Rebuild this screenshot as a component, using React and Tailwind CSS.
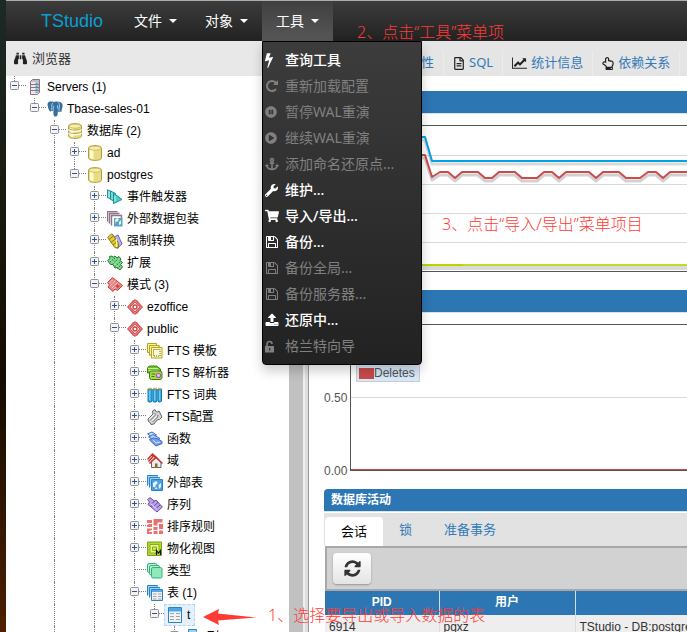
import React from "react";
import {
  FaBinoculars,
  FaPauseCircle,
  FaPlayCircle,
  FaAnchor,
  FaWrench,
  FaShoppingCart,
  FaUnlockAlt,
  FaRegFileAlt,
  FaRegHandPointUp,
  FaTachometerAlt,
  FaInfoCircle,
} from "react-icons/fa";

const UI = "font-['Noto_Sans','Noto_Sans_CJK_SC',sans-serif]";
const ARIAL = "font-['Liberation_Sans','Noto_Sans_CJK_SC',sans-serif]";

/* ---------- glyph icons ---------- */

function Glyph({ d, box = "0 0 1792 1792", className = "size-[14px]" }) {
  return (
    <svg viewBox={box} fill="currentColor" className={className} aria-hidden="true">
      <path d={d} />
    </svg>
  );
}

const BOLT =
  "M1333 566q18 20 7 44l-540 1157q-13 25-42 25-4 0-14-2-17-5-25.5-19t-4.5-30l197-808-406 101q-4 1-12 1-18 0-31-11-18-15-13-39l201-825q4-14 16-23t28-9h328q19 0 32 12.5t13 29.5q0 8-5 18l-171 463 396-98q8-2 12-2 19 0 34 15z";
const REPEAT =
  "M1664 256v448q0 26-19 45t-45 19h-448q-42 0-59-40-17-39 14-69l138-138q-148-137-349-137-104 0-198.5 40.5t-163.5 109.5-109.5 163.5-40.5 198.5 40.5 198.5 109.5 163.5 163.5 109.5 198.5 40.5q119 0 225-52t179-147q7-10 23-12 14 0 25 9l137 138q9 8 9.5 20.5t-7.5 22.5q-109 132-264 204.5t-327 72.5q-156 0-298-61t-245-164-164-245-61-298 61-298 164-245 245-164 298-61q147 0 284.5 55.5t244.5 156.5l130-129q29-31 70-14 39 17 39 59z";
const REFRESH =
  "M1639 1056q0 5-1 7-64 268-268 434.5t-478 166.5q-146 0-282.5-55t-243.5-157l-129 129q-19 19-45 19t-45-19-19-45v-448q0-26 19-45t45-19h448q26 0 45 19t19 45-19 45l-137 137q71 66 161 102t187 36q134 0 250-65t186-179q11-17 53-117 8-23 30-23h192q13 0 22.5 9.5t9.5 22.5zm25-800v448q0 26-19 45t-45 19h-448q-26 0-45-19t-19-45 19-45l138-138q-148-137-349-137-134 0-250 65t-186 179q-11 17-53 117-8 23-30 23h-199q-13 0-22.5-9.5t-9.5-22.5v-7q65-268 270-434.5t480-166.5q146 0 284 55.5t245 156.5l130-129q19-19 45-19t45 19 19 45z";
const FLOPPY =
  "M512 1536h768v-384h-768v384zm896 0h128v-896q0-14-10-38.5t-20-34.5l-281-281q-10-10-34-20t-39-10v416q0 40-28 68t-68 28h-576q-40 0-68-28t-28-68v-416h-128v1280h128v-416q0-40 28-68t68-28h832q40 0 68 28t28 68v416zm-384-928v-320q0-13-9.5-22.5t-22.5-9.5h-192q-13 0-22.5 9.5t-9.5 22.5v320q0 13 9.5 22.5t22.5 9.5h192q13 0 22.5-9.5t9.5-22.5zm640 32v928q0 40-28 68t-68 28h-1344q-40 0-68-28t-28-68v-1344q0-40 28-68t68-28h928q40 0 88 20t76 48l280 280q28 28 48 76t20 88z";
const UPLOAD =
  "M1344 1472q0-26-19-45t-45-19-45 19-19 45 19 45 45 19 45-19 19-45zm256 0q0-26-19-45t-45-19-45 19-19 45 19 45 45 19 45-19 19-45zm128-224v320q0 40-28 68t-68 28h-1472q-40 0-68-28t-28-68v-320q0-40 28-68t68-28h427q21 56 70.5 92t110.5 36h256q61 0 110.5-36t70.5-92h427q40 0 68 28t28 68zm-325-648q-17 40-59 40h-256v448q0 26-19 45t-45 19h-256q-26 0-45-19t-19-45v-448h-256q-42 0-59-40-17-39 14-69l448-448q18-19 45-19t45 19l448 448q31 30 14 69z";
const LINE_CHART =
  "M2048 1536v128h-2048v-1536h128v1408h1920zm-128-1248v435q0 21-19.5 29.5t-35.5-7.5l-121-121-633 633q-10 10-23 10t-23-10l-233-233-416 416-192-192 585-585q10-10 23-10t23 10l233 233 464-464-121-121q-16-16-7.5-35.5t29.5-19.5h435q14 0 23 9t9 23z";

/* ---------- tree icons ---------- */

function Pic({ children }) {
  return (
    <svg viewBox="0 0 16 16" className="size-4 shrink-0" aria-hidden="true">
      {children}
    </svg>
  );
}

function Cylinder({ bands }) {
  return (
    <Pic>
      <path d="M1.5 3.2C1.5 1.6 4.2.6 8 .6s6.5 1 6.5 2.6v9.600c0 1.600-2.700 2.600-6.500 2.600s-6.500-1-6.500-2.600z" fill="#e6dc84" stroke="#b39a3a" />
      <path d="M3 4.500v8.600c1 .7 2.200 1 3.500 1.200V5.300C5 5.200 3.900 4.900 3 4.500z" fill="#fffbd0" />
      <ellipse cx="8" cy="3.2" rx="6" ry="2" fill="#f6efb0" stroke="#c9b456" strokeWidth=".8" />
      {bands && (
        <path d="M1.5 6.400C3 8.600 13 8.600 14.500 6.400M1.500 9.800c1.500 2.200 11.500 2.200 13 0" fill="none" stroke="#fffdf0" strokeWidth="1.6" />
      )}
      {bands && (
        <path d="M1.5 5.400C3 7.600 13 7.600 14.500 5.400M1.500 8.900c1.500 2.200 11.500 2.200 13 0" fill="none" stroke="#b39a3a" strokeWidth=".8" />
      )}
    </Pic>
  );
}

const ICONS = {
  servers: (
    <Pic>
      <path d="M3.5 2.5l2-2h7v13l-2 2h-7z" fill="#c9b9c6" stroke="#8a7486" />
      <path d="M4 3h6.5v12H4z" fill="#efe6ee" />
      <path d="M4 5.5h8M4 8.5h8M4 11.5h8" stroke="#8a7486" />
      <path d="M8.5 3.5h2v1.5h-2zM8.5 6.5h2v1.5h-2zM8.5 9.5h2v1.5h-2zM8.5 12.5h2v1.5h-2z" fill="#2fb7c9" />
    </Pic>
  ),
  elephant: (
    <Pic>
      <path
        d="M3.300.6C1.200.8.300 2.200.6 4.300c.3 2.300 1.200 5 2.300 6 .8.6 1.500-.2 2-.9.2.5.8.7 1.500.6-.1 2 0 3.700.5 4.700.4.9 1.900 1.200 2.900.5.9-.6.900-2 1-4.700 1.200.5 3 .3 4-.3.6-.4.3-.8-.5-.8 1-2 1.600-4.500 1.100-6.200C14.800 1.300 13 .4 11 .7 9.600.3 8 .3 6.800 1 5.700.6 4.500.500 3.300.6z"
        fill="#336f9f"
      />
      <path
        d="M5.900 1.800C4.700 3.200 4.600 5 4.800 6.500c.1 1 0 2-.2 2.700M6.500 9.800c-.6-1-.300-2 .100-3 .3-.8.100-1.600-.4-2.100M11.200 1.400c1.300 1.300 1.500 3 1.100 4.600-.3 1.200-.6 2.500-.2 3.900M10.700 4.200c-.5 1.200 0 2.600.4 3.700"
        fill="none"
        stroke="#d6e6f3"
        strokeWidth=".8"
      />
    </Pic>
  ),
  databases: <Cylinder bands />,
  database: <Cylinder />,
  trigger: (
    <Pic>
      <path d="M.5.8l4.5 2v7l-4.500-1z" fill="#8fe6e0" stroke="#238f95" />
      <path d="M3.5 2l5 2.500v8l-5-2z" fill="#6fdcd6" stroke="#238f95" />
      <path d="M6.5 4l8.500 6.500-8.500 4z" fill="#3fcfc9" stroke="#238f95" />
      <path d="M8 7v5.5" stroke="#c9fbf7" />
    </Pic>
  ),
  fdw: (
    <Pic>
      <path d="M.5 10.5V.5h10M2.500 12.500v-10h10M4.500 14.500v-10h10V7" fill="none" stroke="#8d7284" strokeWidth="1.4" />
      <path d="M7 7h8.500v8.500H7z" fill="#5aa5bd" />
      <path d="M8 9l2-2 2 1-1 2-2 1v2zM12 11l2-2v4l-2 1z" fill="#e8f6fa" />
    </Pic>
  ),
  cast: (
    <Pic>
      <path d="M7 4l4-2 4 9-5 4.5z" fill="#b9b2ee" stroke="#6a60c0" />
      <path d="M.6 4.5L5 .7l6.500 9.500v4.500H8z" fill="#e0cd34" stroke="#8f7d16" />
      <path d="M2 6.5l5-4M4 9.500l5-4M6 12l5-4" stroke="#8f7d16" />
      <path d="M9.5 6v8" stroke="#fff7a8" />
    </Pic>
  ),
  extension: (
    <Pic>
      <path d="M.6 5.5L3 3.500l-.5-2 2.500-.5 1 1.500 2-1.500 2 2 2-1.500 2 2.500-1 1.500 2.500 2-2 2 2 2.500-2.500 3-3-2.500-2 .5-2-3.500-2.500 0z" fill="#7fd68c" stroke="#1e7a34" />
      <path d="M3 7l5-4M5.5 9l5-4.500M8 11.500L13 7M10 13.500l4-3.500" stroke="#1e7a34" strokeDasharray="1.5 1" />
      <path d="M4 5.5l6 6" stroke="#dffbe0" strokeDasharray="1 1.5" />
    </Pic>
  ),
  schemas: (
    <Pic>
      <path d="M.6 5.5L5.500.6 10 4l5.500 4.500-5 5L8 12l-2 2.500L1 10l1.500-2z" fill="#e98787" stroke="#c43d3d" />
      <path d="M3 5.5l3-3M3 9l6-6M5 11l6-6M7 12l5.500-5.500" stroke="#fff" strokeWidth=".8" strokeDasharray="1 1" />
      <path d="M10.5 7l2.500 2-2.500 2.500L8.500 9z" fill="#d84646" />
    </Pic>
  ),
  schema: (
    <Pic>
      <path d="M5.7 1.2h4.600l5 6.800-5 6.800H5.700L.7 8z" fill="#e46a6a" />
      <path d="M8 .5l7.500 7.500L8 15.500.5 8z" fill="#e88080" stroke="#c94545" />
      <path d="M8 3.2L12.800 8 8 12.800 3.200 8z" fill="#fff" stroke="#c94545" />
      <circle cx="8" cy="8" r="2" fill="#fff" stroke="#c94545" strokeWidth="1.4" />
    </Pic>
  ),
  ftsTemplate: (
    <Pic>
      <path d="M.5.5h9v9h-9zM2.500 2.500h9.500v9.500H2.500z" fill="#f7f3a0" stroke="#b5a51c" />
      <path d="M2.5 2.500h9.500v9.500H2.500z" fill="#f7f3a0" stroke="#b5a51c" />
      <path d="M4.5 4.500h10.500v10.500H4.500z" fill="#fbf8b4" stroke="#b5a51c" />
      <path d="M6.5 6.500h6.500v6.500H6.500z" fill="#fdfbd8" stroke="#6b6410" strokeDasharray="1 1" />
    </Pic>
  ),
  ftsParser: (
    <Pic>
      <path d="M.5 4c0-2 1-3 3-3h6l4 3v4H.5z" fill="#6fbf2b" stroke="#3d7d12" />
      <path d="M1.5 5.500h10M1 3.500h10" stroke="#c9f08f" />
      <rect x="2.5" y="6" width="12.5" height="8.5" rx="2" fill="#a5dc4d" stroke="#3d7d12" />
      <path d="M4.5 9h4M4.500 11.500h3" stroke="#3d7d12" />
      <circle cx="11.5" cy="10.5" r="2" fill="#f0c9ef" stroke="#b04fb0" strokeWidth="1.2" />
    </Pic>
  ),
  ftsDict: (
    <Pic>
      <path d="M1 2h4v12l-1 1H1.500L1 14zM6 2h4v12l-1 1H6.500L6 14zM11 2h3.500v12l-1 1h-2l-.5-1z" fill="#3fb2ea" stroke="#1670a8" />
      <path d="M1 1.5h4M6 1.500h4M11 1.500h3.500" stroke="#d8b93c" strokeWidth="1.5" />
      <path d="M2.5 4v9M7.500 4v9M12.500 4v9" stroke="#7fcdf5" strokeWidth=".8" />
    </Pic>
  ),
  ftsConfig: (
    <Pic>
      <path d="M1 10l5-5-.5-3L8 .6l1 2 2 .4 1-1 1.500 3 1.500 3-2.500 2.500-2.500.5-3 4-3 .5-1-2-1.500-1z" fill="#d5d5d5" stroke="#666" />
      <path d="M3 11.5l5-5V4M5.500 13l5-5 .5-2" fill="none" stroke="#666" strokeWidth=".9" />
      <path d="M2.5 10l5-5M5 12l5-5" stroke="#fff" />
    </Pic>
  ),
  func: (
    <Pic>
      <path d="M.6 3L5 1l4.500 3-4.500 2z" fill="#cfe0fb" stroke="#3c6cc4" />
      <path d="M1.5 6L6 3.500l7 4-4.500 2.500z" fill="#b4cff8" stroke="#3c6cc4" />
      <path d="M2.5 8.500l4-1.500L11 8l4 2.500v2L9 15l-4.500-4z" fill="#6f9fee" stroke="#3c6cc4" />
      <path d="M6 9l3 3 4-1" fill="none" stroke="#dbe8fd" />
    </Pic>
  ),
  domain: (
    <Pic>
      <path d="M4.5 8v6.500h9.500V9L9 5z" fill="#eeeaea" stroke="#666" />
      <path d="M.5 6.500l5-5.500 4 3.500M1.500 8.500l5-5.500 3 2M2.500 10.500L9 4l6.500 6.500" fill="none" stroke="#c8342f" strokeWidth="1.5" />
      <path d="M8 10.5h2.500v4.500H8z" fill="#8a6a30" />
    </Pic>
  ),
  foreignTable: (
    <Pic>
      <path d="M.5 10.5V.5h10v1M2.500 12.500v-10h10v1" fill="#9dd0f5" stroke="#2a83c9" />
      <path d="M4.5 4.500h11v11h-11z" fill="#4a9fe0" stroke="#2a83c9" />
      <path d="M6 8l3-2 2 2-2 1.500-1 3-2-1zM11.500 10l2.500-2v4l-2 2zM9 12l1.500 2H8z" fill="#f0f8ff" />
    </Pic>
  ),
  sequence: (
    <Pic>
      <path d="M.6 2.500L3 .6l4.500 3.500L9 3l6.400 7-5.400 5L1 7.500l1.500-2.500z" fill="#b9a2e4" stroke="#6b4cae" />
      <path d="M5 6.5l3-3M7 9l4-3.500M9 11.500l4-3.500M3.500 8l2 2" stroke="#6b4cae" />
      <path d="M4 7l6 5.5" stroke="#e9defb" />
    </Pic>
  ),
  collation: (
    <Pic>
      <path d="M0 1h5v3H0zM6.500 0h9v3.500h-5v3h-4zM1.500 5h3.500v3H0V6.500zM6.500 8h4v3h-4zM12 5h4v5h-4zM0 9.500h5V11l-3 1v1h3v2H0zM6.500 12h4v3h-4zM12 11.500h4V15h-4z" fill="#e87272" />
    </Pic>
  ),
  matview: (
    <Pic>
      <path d="M.6 1h13.900v13.500H.6z" fill="#b5d934" stroke="#7d9e12" />
      <path d="M3 3.500h9v8.500H3z" fill="#e4f58c" stroke="#8aad1c" />
      <path d="M5.5 6h4v3.500h-4z" fill="#c6e44d" stroke="#8aad1c" />
      <path d="M9.500 14V9.500l2 2.500 2-2.500V14" fill="none" stroke="#111" strokeWidth="1.2" />
    </Pic>
  ),
  types: (
    <Pic>
      <rect x=".5" y=".5" width="9.5" height="9" rx="1.5" fill="#b6f2d2" stroke="#38b07a" />
      <rect x="2.5" y="2.5" width="10" height="9.5" rx="1.5" fill="#b6f2d2" stroke="#38b07a" />
      <rect x="4.5" y="4.5" width="10.5" height="10.5" rx="1.5" fill="#8feabb" stroke="#38b07a" />
    </Pic>
  ),
  tables: (
    <Pic>
      <path d="M.5 10.5V.5h10v1M2.500 12.500v-10h10v1" fill="#9dd0f5" stroke="#2a83c9" />
      <path d="M4.5 4.500h11v11h-11z" fill="#eef2f5" stroke="#2a83c9" />
      <path d="M5 5h10v2H5z" fill="#4fa8e8" />
      <path d="M6 9h3.500M11 9h3.500M6 11.500h3.500M11 11.500h3.500M6 14h3.500M11 14h3.500" stroke="#a3a3a3" />
    </Pic>
  ),
  table: (
    <Pic>
      <path d="M1.500.5h13v15h-13z" fill="#f1f3f5" stroke="#2a83c9" />
      <path d="M2 1h12v3.500H2z" fill="#4fa8e8" />
      <path d="M3 6.500h4M9 6.500h4M3 9.500h4M9 9.500h4M3 12.500h4M9 12.500h4" stroke="#a3a3a3" strokeWidth="1.2" />
    </Pic>
  ),
  columns: (
    <Pic>
      <path d="M1.5 9V.5h8v2M4.500 12V3.500h9V12" fill="#9dd0f5" stroke="#2a83c9" />
      <path d="M7 7h4v9H7z" fill="#3c93da" />
    </Pic>
  ),
};

const TREE = [
  { depth: 0, label: "Servers (1)", icon: "servers", open: true, last: true },
  { depth: 1, label: "Tbase-sales-01", icon: "elephant", open: true, last: true },
  { depth: 2, label: "数据库 (2)", icon: "databases", open: true },
  { depth: 3, label: "ad", icon: "database" },
  { depth: 3, label: "postgres", icon: "database", open: true, last: true },
  { depth: 4, label: "事件触发器", icon: "trigger" },
  { depth: 4, label: "外部数据包装", icon: "fdw" },
  { depth: 4, label: "强制转换", icon: "cast" },
  { depth: 4, label: "扩展", icon: "extension" },
  { depth: 4, label: "模式 (3)", icon: "schemas", open: true },
  { depth: 5, label: "ezoffice", icon: "schema" },
  { depth: 5, label: "public", icon: "schema", open: true },
  { depth: 6, label: "FTS 模板", icon: "ftsTemplate" },
  { depth: 6, label: "FTS 解析器", icon: "ftsParser" },
  { depth: 6, label: "FTS 词典", icon: "ftsDict" },
  { depth: 6, label: "FTS配置", icon: "ftsConfig" },
  { depth: 6, label: "函数", icon: "func" },
  { depth: 6, label: "域", icon: "domain" },
  { depth: 6, label: "外部表", icon: "foreignTable" },
  { depth: 6, label: "序列", icon: "sequence" },
  { depth: 6, label: "排序规则", icon: "collation" },
  { depth: 6, label: "物化视图", icon: "matview" },
  { depth: 6, label: "类型", icon: "types", leaf: true },
  { depth: 6, label: "表 (1)", icon: "tables", open: true },
  { depth: 7, label: "t", icon: "table", open: true, last: true, selected: true },
  { depth: 8, label: "列", icon: "columns" },
];

/* Depths whose branch has further siblings, so their guide line runs on. */
const RUNNING = [2, 4, 5, 6];

function Toggle({ open, label }) {
  return (
    <button
      type="button"
      aria-label={(open ? "收起 " : "展开 ") + label}
      aria-expanded={!!open}
      className="col-start-1 row-start-1 ml-1 mt-[5px] size-[9px]"
    >
      <svg viewBox="0 0 9 9" className="size-[9px]" aria-hidden="true">
        <rect x=".5" y=".5" width="8" height="8" rx="1" fill="#f4f4f4" stroke="#909090" />
        <path d={open ? "M2 4.5h5" : "M2 4.5h5M4.5 2v5"} stroke="#2f4f9f" />
      </svg>
    </button>
  );
}

function TreeRow({ row }) {
  const guides = Array.from({ length: row.depth }, (_, i) => RUNNING.includes(i));
  return (
    <li className="flex h-[22px]">
      {guides.map((on, i) => (
        <span key={i} className="w-5 shrink-0 pl-2">
          {on && <span className="block h-full border-l border-dotted border-[#808080]" />}
        </span>
      ))}
      <span className="grid w-5 shrink-0 grid-cols-1 grid-rows-1 items-start">
        <span
          className={
            "col-start-1 row-start-1 ml-2 border-l border-dotted border-[#808080] " +
            (row.last ? "h-[9px]" : "h-[22px]")
          }
        />
        <span className="col-start-1 row-start-1 ml-2 mt-[9px] border-t border-dotted border-[#808080]" />
        {!row.leaf && <Toggle open={row.open} label={row.label} />}
      </span>
      <a
        href="#node"
        className={
          "flex h-[22px] items-center border pb-px text-xs whitespace-nowrap text-black " +
          (row.selected ? "-ml-0.5 border-dashed border-[#b5d3ee] bg-[#e4f0fb] pl-0.5 pr-1" : "border-transparent")
        }
      >
        {ICONS[row.icon]}
        <span className="ml-1">{row.label}</span>
      </a>
    </li>
  );
}

/* ---------- menu ---------- */

const MENU = [
  { label: "查询工具", icon: <Glyph d={BOLT} className="-ml-1 size-4" />, on: true },
  { label: "重新加载配置", icon: <Glyph d={REPEAT} /> },
  { label: "暂停WAL重演", icon: <FaPauseCircle className="size-3" /> },
  { label: "继续WAL重演", icon: <FaPlayCircle className="size-3" /> },
  { label: "添加命名还原点...", icon: <FaAnchor className="size-[14px]" /> },
  { label: "维护...", icon: <FaWrench className="size-[13px]" />, on: true },
  { label: "导入/导出...", icon: <FaShoppingCart className="size-[14px]" />, on: true },
  { label: "备份...", icon: <Glyph d={FLOPPY} />, on: true },
  { label: "备份全局...", icon: <Glyph d={FLOPPY} /> },
  { label: "备份服务器...", icon: <Glyph d={FLOPPY} /> },
  { label: "还原中...", icon: <Glyph d={UPLOAD} />, on: true },
  {
    label: "格兰特向导",
    icon: (
      <svg viewBox="0 0 12 13" className="h-[13px] w-3" fill="currentColor" aria-hidden="true">
        <path d="M0 6h9v6.500H0z" />
        <path d="M2 6.500V4a2.500 2.500 0 0 1 5 0" fill="none" stroke="currentColor" strokeWidth="1.6" />
        <path d="M4 8h1.200v2.500H4z" fill="#2a2a2a" />
      </svg>
    ),
  },
];

function ToolsMenu() {
  return (
    <ul
      className={
        UI +
        " absolute left-0 top-full z-20 w-40 rounded-b border border-black bg-linear-to-b from-[#3c3c3c] to-[#222] py-[5px] text-sm shadow-[0_6px_12px_rgba(0,0,0,0.2)]"
      }
    >
      {MENU.map((m) => (
        <li key={m.label}>
          <button
            type="button"
            disabled={!m.on}
            className={
              "flex h-[26px] w-full items-center pl-0.5 text-left whitespace-nowrap " +
              (m.on ? "font-medium text-white" : "text-[#808080]")
            }
          >
            <span className="flex w-5 shrink-0">{m.icon}</span>
            {m.label}
          </button>
        </li>
      ))}
    </ul>
  );
}

function NavItem({ label, active, children }) {
  return (
    <li className={"relative " + (active ? "bg-linear-to-b from-[#404040] to-[#575757]" : "")}>
      <button type="button" className="flex h-10 items-center gap-[7px] px-[14px] text-sm text-white">
        {label}
        <span className="border-x-4 border-t-4 border-x-transparent border-t-white" />
      </button>
      {children}
    </li>
  );
}

/* ---------- charts ---------- */

function PanelTitle({ children }) {
  return (
    <h2 className="h-[22px] rounded-tl bg-[#2c76b4] pl-[7px] text-xs leading-[22px] font-bold text-white shadow-[0_1px_0_#dde3ea]">
      {children}
    </h2>
  );
}

const RED_LINE =
  "0,29 74,29 81,51 89,46 97,46 104,52 111,46 127,46 134,52 141,52 148,46 164,46 171,52 186,52 193,46 201,46 208,52 215,46 238,46 245,52 252,46 268,46 275,52 289,52 297,46 305,46 312,52 319,46 342,46 349,52 356,46 900,46";
const BLUE_LINE = "0,11 74,11 81,35 900,35";

function SessionsChart() {
  return (
    <svg className="h-[147px] w-full border-y border-l border-[#545454]" aria-hidden="true">
      {[29.5, 58.5, 87.5, 116.5].map((y) => (
        <path key={y} d={`M0 ${y}H2000`} stroke="#d9d9d9" />
      ))}
      <g fill="none" strokeLinejoin="round">
        <polyline points={BLUE_LINE} stroke="#000" strokeOpacity=".15" strokeWidth="3" transform="translate(0 3)" />
        <polyline points={BLUE_LINE} stroke="#00a2e8" strokeWidth="2" />
        <polyline points={RED_LINE} stroke="#000" strokeOpacity=".18" strokeWidth="3" transform="translate(0 3)" />
        <polyline points={RED_LINE} stroke="#cb4b4b" strokeWidth="2" />
        <path d="M0 142H2000" stroke="#000" strokeOpacity=".15" strokeWidth="4" />
        <path d="M0 139H2000" stroke="#c3d92b" strokeWidth="2" />
        <path d="M0 139H112" stroke="#bcd300" strokeWidth="2" />
      </g>
    </svg>
  );
}

function TuplesChart() {
  return (
    <div className="relative min-w-0 flex-1">
      <svg className="h-[147px] w-full border-y border-l border-[#545454]" aria-hidden="true">
        <path d="M0 72.5H2000" stroke="#d9d9d9" />
        <path d="M0 144.5H2000" stroke="#cb4b4b" />
      </svg>
      <ul className="absolute left-1.5 top-2 border border-[#ccc] bg-[#d7e9fb] pl-0.5 text-xs leading-4 text-[#545454]">
        <li className="flex items-center">
          <span className="h-[11px] w-[15px] bg-[#00a2e8]" />
          Inserts
        </li>
        <li className="flex items-center">
          <span className="h-[11px] w-[15px] bg-[#bcd300]" />
          Updates
        </li>
        <li className="flex items-center">
          <span className="h-[11px] w-[15px] bg-[#cb4b4b]" />
          Deletes
        </li>
      </ul>
    </div>
  );
}

const TABS = [
  { label: "仪表盘", icon: <FaTachometerAlt className="size-3" /> },
  { label: "属性", icon: <FaInfoCircle className="size-3" /> },
  { label: "SQL", icon: <FaRegFileAlt className="h-[13px] w-3" /> },
  { label: "统计信息", icon: <Glyph d={LINE_CHART} box="0 0 2048 1792" className="h-[14px] w-[15px]" /> },
  { label: "依赖关系", icon: <FaRegHandPointUp className="h-[13px] w-3" /> },
];

export default function App() {
  return (
    <div className={ARIAL + " relative flex h-screen overflow-hidden bg-white"}>
      <div className="w-1.5 shrink-0 bg-linear-to-b from-[#1c2a26] via-[#140c00] via-60% to-[#4e2000]" />
      <div className="flex min-w-0 flex-1 flex-col">
        <nav className={UI + " flex shrink-0 border-t border-[#a9adab] bg-linear-to-b from-[#3c3c3c] to-[#222]"}>
          <a
            href="#home"
            className="flex h-10 w-[114px] items-center pl-[35px] font-['Liberation_Sans',sans-serif] text-lg text-[#0a9fd6]"
          >
            TStudio
          </a>
          <ul className="flex">
            <NavItem label="文件" />
            <NavItem label="对象" />
            <NavItem label="工具" active>
              <ToolsMenu />
            </NavItem>
          </ul>
        </nav>

        <div className="flex min-h-0 flex-1">
          <aside className="flex w-[303px] shrink-0 flex-col border-r border-[#999]">
            <h1 className={UI + " flex h-[35px] shrink-0 items-center gap-[5px] bg-[#e8e8e8] pl-2 text-[13px] text-[#333]"}>
              <FaBinoculars className="size-[13px] text-[#222]" />
              浏览器
            </h1>
            <div className="flex min-h-0 flex-1">
              <ul className="min-w-0 flex-1 overflow-hidden">
                {TREE.map((row) => (
                  <TreeRow key={row.label} row={row} />
                ))}
              </ul>
              <div className="w-[14px] bg-[#c1c1c1]" />
              <div className="w-0.5 bg-[#f0f0f0]" />
              <div className="w-[3px] bg-[#dedede]" />
            </div>
          </aside>

          <main className="flex min-w-0 flex-1 flex-col overflow-hidden">
            <ul className={UI + " flex h-[35px] shrink-0 items-end bg-[#e5e5e5] text-[13px] text-[#337ab7]"}>
              {TABS.map((t) => (
                <li key={t.label} className="shrink-0 border-r border-[#ececec]">
                  <a href="#tab" className="flex h-[26px] items-center gap-1 px-[9px] whitespace-nowrap">
                    <span className="text-[#222]">{t.icon}</span>
                    {t.label}
                  </a>
                </li>
              ))}
            </ul>

            <div className="pl-[15px] pt-[15px]">
              <section className="mb-[18px]">
                <PanelTitle />
                <div className="mt-3 flex pl-[26px]">
                  <SessionsChart />
                </div>
              </section>

              <section className="mb-[18px]">
                <PanelTitle />
                <div className="mt-3 flex">
                  <div className="-my-2 flex w-[26px] flex-col justify-between text-xs leading-4 text-[#545454]">
                    <span>1.00</span>
                    <span>0.50</span>
                    <span>0.00</span>
                  </div>
                  <TuplesChart />
                </div>
              </section>

              <section>
                <PanelTitle>数据库活动</PanelTitle>
                <div className={UI + " mt-0.5 flex h-[33px] items-end bg-[#e2e2e2] pl-px text-[13px] text-[#337ab7]"}>
                  <button type="button" className="h-[29px] rounded-t bg-white px-4 text-black">
                    会话
                  </button>
                  <button type="button" className="h-[33px] px-4">
                    锁
                  </button>
                  <button type="button" className="h-[33px] px-4">
                    准备事务
                  </button>
                </div>
                <div className="ml-px border-2 border-r-0 border-[#a8a8a8] bg-[#d2d2d2] px-1.5 py-[5px]">
                  <button
                    type="button"
                    aria-label="刷新"
                    className="flex h-[31px] w-[38px] items-center justify-center rounded-sm bg-linear-to-b from-white to-[#e4e4e4] text-[#333] shadow-[0_1px_2px_rgba(0,0,0,0.3)]"
                  >
                    <Glyph d={REFRESH} className="size-[19px]" />
                  </button>
                </div>
                <table className="ml-px w-[600px] table-fixed text-xs text-[#333]">
                  <thead className="bg-[#2c76b4] text-white">
                    <tr className="h-6">
                      <th className="w-[114px] border-r border-[#d0dfec] pb-0.5">PID</th>
                      <th className="w-[136px] border-r border-[#d0dfec] pb-0.5">用户</th>
                      <th />
                    </tr>
                  </thead>
                  <tbody className="bg-[#eee]">
                    <tr className="h-6">
                      <td className="border-r border-[#ddd] pl-1">6914</td>
                      <td className="border-r border-[#ddd] pl-1">pgxz</td>
                      <td className="pl-1 whitespace-nowrap">TStudio - DB:postgres</td>
                    </tr>
                  </tbody>
                </table>
              </section>
            </div>
          </main>
        </div>
      </div>

      <div className={UI + " pointer-events-none absolute inset-0 z-30 text-base leading-5 font-light whitespace-nowrap text-[#ff3b36]"}>
        <p className="absolute left-[357px] top-[22px]">2、点击“工具”菜单项</p>
        <p className="absolute left-[442px] top-[214px]">3、点击“导入/导出”菜单项目</p>
        <p className="absolute left-[268px] top-[605px]">1、选择要导出或导入数据的表</p>
        <svg viewBox="0 0 54 16" className="absolute left-[203px] top-[609px] h-4 w-[54px]" fill="currentColor" aria-hidden="true">
          <path d="M0 8L16 0l-1 4.500L54 8.500 15 11.500 16 16z" />
        </svg>
      </div>
    </div>
  );
}
